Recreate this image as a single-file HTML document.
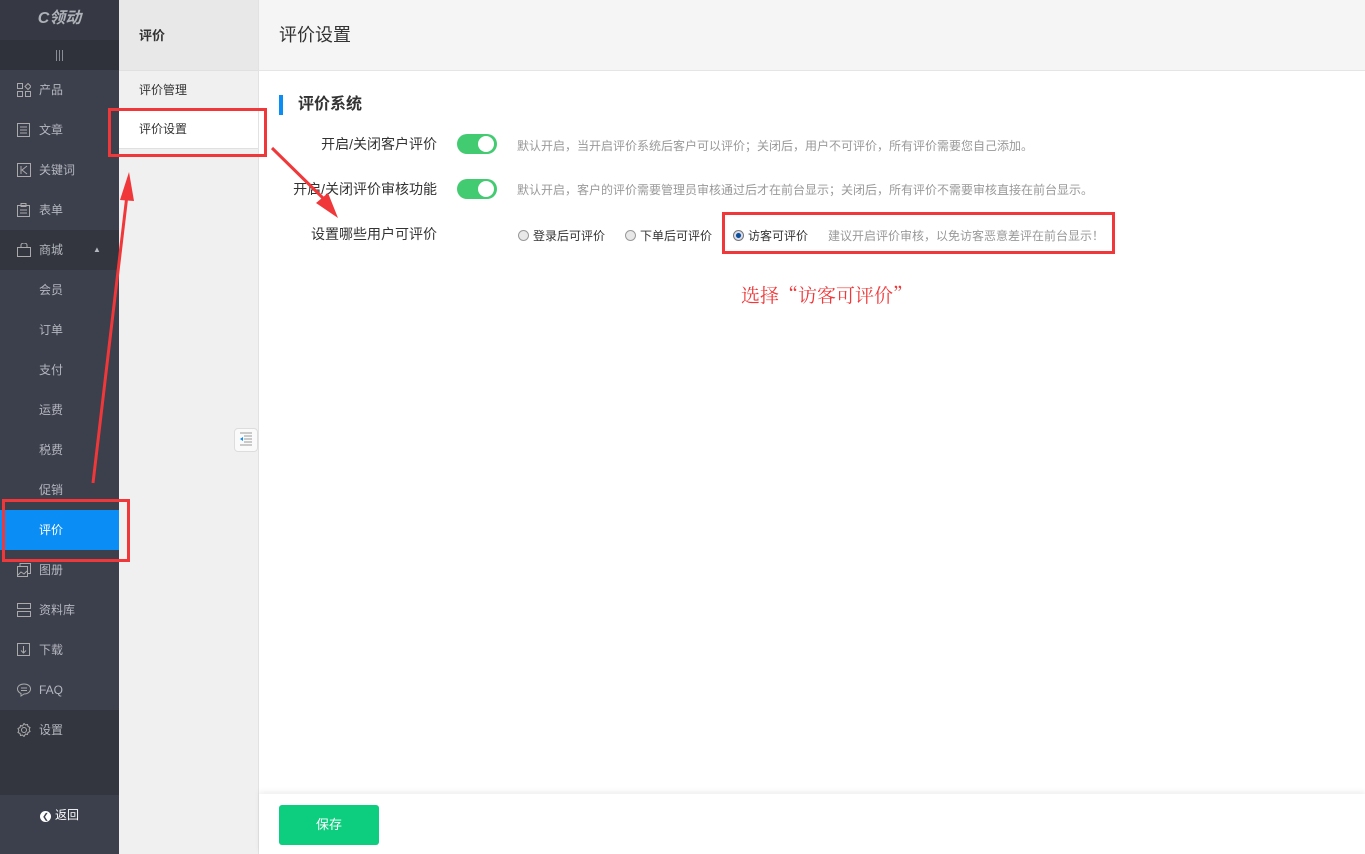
<!DOCTYPE html>
<html><head><meta charset="utf-8"><style>
*{margin:0;padding:0;box-sizing:border-box}
body{width:1365px;height:854px;overflow:hidden;position:relative;font-family:"Liberation Sans","Noto Sans CJK SC",sans-serif;font-size:12px;background:#fff}
.sb{position:absolute;left:0;top:0;width:119px;height:854px;background:#3c3f4c}
.logo{height:40px;background:#363943;color:#aeb1b8;font-style:italic;font-weight:bold;font-size:16px;text-align:center;line-height:38px}
.tog{height:30px;background:#2f323b;text-align:center;padding-top:10px}
.tog span{display:inline-block;width:1px;height:11px;background:#8a8d96;margin:0 1px}
.it{height:40px;line-height:40px;color:#b4b7be;padding-left:39px;position:relative}
.it svg{position:absolute;left:17px;top:13px}
.dark{background:#33363f}
.act{background:#0a8df5;color:#fff}
.ret{position:absolute;left:0;top:795px;width:119px;height:59px;background:#3c3f4c;color:#fff;text-align:center;line-height:40px}
.sub{position:absolute;left:119px;top:0;width:140px;height:854px;background:#f0f0f0;border-right:1px solid #e2e2e2}
.sub .h{height:71px;background:#e9e8e8;line-height:71px;padding-left:20px;font-weight:bold;font-size:13px;color:#333;border-bottom:1px solid #e0e0e0}
.sub .s{height:39px;line-height:39px;padding-left:20px;color:#333;border-bottom:1px solid #e0e0e0}
.main{position:absolute;left:259px;top:0;right:0;height:854px}
.top{height:71px;background:#f5f5f5;border-bottom:1px solid #e5e5e5;font-size:18px;line-height:71px;padding-left:20px;color:#333}
.ttl{position:absolute;left:20px;top:95px;border-left:4px solid #0a8df5;padding-left:15px;font-size:16px;font-weight:bold;color:#333;line-height:20px}
.lbl{position:absolute;right:calc(100% - 178px);color:#333;font-size:14px;white-space:nowrap}
.sw{position:absolute;left:198px;width:40px;height:20px;border-radius:10px;background:#42cb70}
.sw:after{content:"";position:absolute;right:3px;top:2px;width:16px;height:16px;border-radius:50%;background:#fff}
.tip{position:absolute;left:258px;color:#999;font-size:12px}
.rd{position:absolute;font-size:12px;color:#333}
.rd i{display:inline-block;width:11px;height:11px;border-radius:50%;border:1px solid #999;background:#e8e8e8;vertical-align:-1px;margin-right:4px}
.foot{position:absolute;left:0;right:0;top:794px;height:60px;background:#fff;box-shadow:0 -3px 5px rgba(0,0,0,.06)}
.btn{position:absolute;left:20px;top:11px;width:100px;height:40px;border-radius:3px;background:#0dcd7e;color:#fff;text-align:center;line-height:40px;font-size:13px}
.box{position:absolute;border:3px solid #f0383a}
</style></head><body>
<div class="sb">
<div class="logo">C领动</div>
<div class="tog"><span></span><span></span><span></span></div>
<div class="it"><svg width="14" height="14" fill="none" stroke="#aaa"><rect x=".5" y=".5" width="5" height="5"/><rect x=".5" y="8.5" width="5" height="5"/><rect x="8.5" y="8.5" width="5" height="5"/><path d="M11 .5l3 3-3 3-3-3z"/></svg>产品</div>
<div class="it"><svg width="14" height="14" fill="none" stroke="#aaa"><rect x=".5" y=".5" width="12" height="13"/><path d="M3 4h7M3 7h7M3 10h7"/></svg>文章</div>
<div class="it"><svg width="14" height="14" fill="none" stroke="#aaa"><rect x=".5" y=".5" width="13" height="13"/><path d="M4 3v8M10 3L5 7l5 4"/></svg>关键词</div>
<div class="it"><svg width="14" height="14" fill="none" stroke="#aaa"><rect x=".5" y="2.5" width="12" height="11"/><path d="M4 .5h5v3H4zM3 7h7M3 10h7"/></svg>表单</div>
<div class="it dark"><svg width="14" height="14" fill="none" stroke="#aaa"><rect x=".5" y="4.5" width="13" height="9"/><path d="M4 5V2a3 2 0 016 0v3"/></svg>商城<span style="position:absolute;left:93px;top:0;font-size:8px">▲</span></div>
<div class="it">会员</div><div class="it">订单</div><div class="it">支付</div><div class="it">运费</div><div class="it">税费</div><div class="it">促销</div>
<div class="it act">评价</div>
<div class="it"><svg width="14" height="14" fill="none" stroke="#aaa"><rect x=".5" y="3.5" width="10" height="10"/><path d="M3 3V.5h10.5v10H11M1 12l3-3 3 2 3-3"/></svg>图册</div>
<div class="it"><svg width="14" height="14" fill="none" stroke="#aaa"><rect x=".5" y=".5" width="13" height="5"/><rect x=".5" y="8.5" width="13" height="5"/></svg>资料库</div>
<div class="it"><svg width="14" height="14" fill="none" stroke="#aaa"><rect x=".5" y=".5" width="12" height="12"/><path d="M6.5 3v7M4 7.5l2.5 2.5L9 7.5"/></svg>下载</div>
<div class="it"><svg width="14" height="14" fill="none" stroke="#aaa"><path d="M7 1c4 0 6.5 2 6.5 5s-3 5-6.5 5l-3 2v-2.5C2 9.5.5 8 .5 6 .5 3 3 1 7 1zM4 5h6M4 7.5h6"/></svg>FAQ</div>
<div class="it dark" style="height:85px"><svg width="14" height="14" fill="none" stroke="#aaa"><circle cx="7" cy="7" r="2.5"/><path d="M7 .5l1.5 1.5 2-.5.5 2 2 1-.8 2 .8 2-2 1-.5 2-2-.5L7 13.5 5.5 12l-2 .5-.5-2-2-1 .8-2L1 5.5l2-1 .5-2 2 .5z"/></svg>设置</div>
<div class="ret"><span style="display:inline-block;width:11px;height:11px;border-radius:50%;background:#fff;color:#3c3f4c;font-size:8px;line-height:11px;vertical-align:0;margin-right:4px">❮</span>返回</div>
</div>
<div class="sub"><div class="h">评价</div><div class="s">评价管理</div><div class="s" style="background:#fff">评价设置</div>
<div style="position:absolute;left:115px;top:428px;width:24px;height:24px;border:1px solid #ddd;border-radius:4px;background:#fafafa"><svg width="22" height="22" style="position:absolute;left:0;top:0"><path d="M9 7h8M9 10h8M9 13h8M5 16h12M5 4h12" stroke="#999"/><path d="M8 8l-3 2 3 2z" fill="#0a8df5"/></svg></div>
</div>
<div class="main">
<div class="top">评价设置</div>
<div class="ttl">评价系统</div>
<div class="lbl" style="top:134px">开启/关闭客户评价</div><div class="sw" style="top:134px"></div><div class="tip" style="top:137px">默认开启，当开启评价系统后客户可以评价；关闭后，用户不可评价，所有评价需要您自己添加。</div>
<div class="lbl" style="top:179px">开启/关闭评价审核功能</div><div class="sw" style="top:179px"></div><div class="tip" style="top:181px">默认开启，客户的评价需要管理员审核通过后才在前台显示；关闭后，所有评价不需要审核直接在前台显示。</div>
<div class="lbl" style="top:224px">设置哪些用户可评价</div>
<div class="rd" style="left:259px;top:227px"><i></i>登录后可评价</div>
<div class="rd" style="left:366px;top:227px"><i></i>下单后可评价</div>
<div class="rd" style="left:474px;top:227px"><i style="background:radial-gradient(#0a4f9a 35%,#dde 45%);border-color:#777"></i>访客可评价</div>
<div class="tip" style="left:569px;top:227px">建议开启评价审核，以免访客恶意差评在前台显示！</div>
<div style="position:absolute;left:482px;top:281px;color:#f0383a;font-size:19px;font-family:'Noto Serif CJK SC',serif">选择“访客可评价”</div>
<div class="foot"><div class="btn">保存</div></div>
</div>
<div class="box" style="left:108px;top:108px;width:159px;height:49px"></div>
<div class="box" style="left:722px;top:212px;width:393px;height:42px"></div>
<div class="box" style="left:2px;top:499px;width:128px;height:63px"></div>
<svg width="1365" height="854" style="position:absolute;left:0;top:0;pointer-events:none">
<path d="M93 483L127 195" stroke="#f0383a" stroke-width="3"/><path d="M120 200l9-28 5 29z" fill="#f0383a"/>
<path d="M272 148L325 200" stroke="#f0383a" stroke-width="3"/><path d="M316 203l22 15-10-25z" fill="#f0383a"/>
</svg>
</body></html>
